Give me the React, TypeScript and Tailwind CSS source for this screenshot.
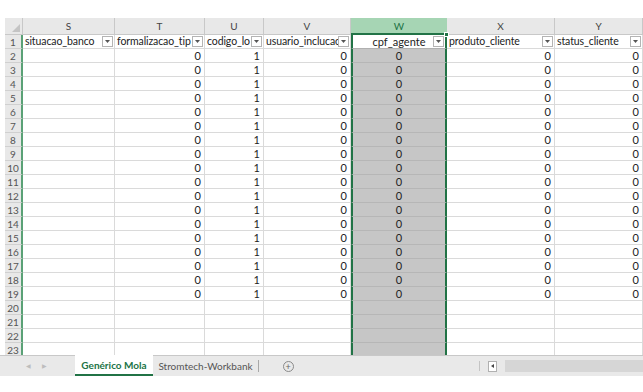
import React from "react";

type Col = {
  letter: string;
  width: string;
  head: string;
  value: string;
  valueAlign: string;
};

const cols: Col[] = [
  { letter: "S", width: "w-[92px]", head: "situacao_banco", value: "", valueAlign: "justify-end" },
  { letter: "T", width: "w-[90px]", head: "formalizacao_tip", value: "0", valueAlign: "justify-end" },
  { letter: "U", width: "w-[59px]", head: "codigo_lo", value: "1", valueAlign: "justify-end" },
  { letter: "V", width: "w-[87px]", head: "usuario_inclucac", value: "0", valueAlign: "justify-end" },
  { letter: "W", width: "w-[96px]", head: "cpf_agente", value: "0", valueAlign: "justify-center" },
  { letter: "X", width: "w-[108px]", head: "produto_cliente", value: "0", valueAlign: "justify-end" },
  { letter: "Y", width: "w-[88px]", head: "status_cliente", value: "0", valueAlign: "justify-end" },
];

const rows = Array.from({ length: 22 }, (_, i) => i + 2);

const FilterButton = () => (
  <span className="mr-[1px] flex h-[11px] w-[11px] shrink-0 items-center justify-center border border-[#b4b4b4] bg-white">
    <svg width="5" height="3" viewBox="0 0 5 3">
      <path d="M0 0h5L2.5 3z" fill="#555" />
    </svg>
  </span>
);

export default function App() {
  return (
    <div className="h-[392px] w-[643px] overflow-hidden bg-white pt-[18px] pl-[5px] font-['Lato','Liberation_Sans',sans-serif] text-[11px] leading-none text-[#222]">
      <div className="h-[337px] overflow-hidden">
        {/* column letters */}
        <div className="flex h-[17px]">
          <div className="relative w-[18px] shrink-0 border-r border-b border-[#c8c8c8] bg-[#e8e8e8]">
            <svg className="absolute right-[2px] bottom-[2px]" width="8" height="8" viewBox="0 0 8 8">
              <path d="M8 0v8H0z" fill="#c4c4c4" />
            </svg>
          </div>
          {cols.map((c) =>
            c.letter === "W" ? (
              <div
                key={c.letter}
                className={`${c.width} flex shrink-0 items-center justify-center border-b-2 border-[#217346] bg-[#a6d5b4] text-[10px] text-[#217346]`}
              >
                {c.letter}
              </div>
            ) : (
              <div
                key={c.letter}
                className={`${c.width} flex shrink-0 items-center justify-center border-r border-b border-[#c8c8c8] bg-[#e8e8e8] text-[10px] text-[#444]`}
              >
                {c.letter}
              </div>
            )
          )}
        </div>

        {/* header row 1 */}
        <div className="flex h-[14px]">
          <div className="flex w-[18px] shrink-0 items-center justify-center border-r-2 border-b border-r-[#5aa176] border-b-[#d0d0d0] bg-[#e8e8e8] text-[10px] text-[#555]">
            1
          </div>
          {cols.map((c) =>
            c.letter === "W" ? (
              <div
                key={c.letter}
                className={`${c.width} relative flex shrink-0 items-center border-x-2 border-b border-x-[#217346] border-b-[#b0b0b0] bg-white`}
              >
                <span className="flex-1 pl-[12px] text-center leading-[13px] whitespace-nowrap">{c.head}</span>
                <FilterButton />
                <span className="absolute -top-[3px] -right-[4px] h-[5px] w-[5px] border border-white bg-[#217346]" />
              </div>
            ) : (
              <div
                key={c.letter}
                className={`${c.width} flex shrink-0 items-center border-r border-b border-[#dadada]`}
              >
                <span className="min-w-0 flex-1 pl-[2px] text-[10.5px] leading-[13px] tracking-[-0.1px] whitespace-nowrap">
                  {c.head}
                </span>
                <FilterButton />
              </div>
            )
          )}
        </div>

        {rows.map((r) => (
          <div key={r} className="flex h-[14px]">
            <div className="flex w-[18px] shrink-0 items-center justify-center border-r-2 border-b border-r-[#5aa176] border-b-[#d0d0d0] bg-[#e8e8e8] text-[10px] text-[#555]">
              {r}
            </div>
            {cols.map((c) =>
              c.letter === "W" ? (
                <div
                  key={c.letter}
                  className={`${c.width} flex shrink-0 items-center justify-center border-x-2 border-b border-x-[#217346] border-b-[#b6b6b6] bg-[#c6c6c6]`}
                >
                  {r <= 19 ? c.value : ""}
                </div>
              ) : (
                <div
                  key={c.letter}
                  className={`${c.width} flex shrink-0 items-center ${c.valueAlign} border-r border-b border-[#dadada] pr-[3px]`}
                >
                  {r <= 19 ? c.value : ""}
                </div>
              )
            )}
          </div>
        ))}
      </div>

      {/* sheet tabs */}
      <div className="-ml-[5px] flex h-[21px] items-stretch border-t border-[#c8c8c8] bg-[#e9e9e9] text-[10px]">
        <div className="flex w-[75px] shrink-0 items-center gap-[11px] pl-[26px] text-[6px] text-[#bdbdbd]">
          <span>◀</span>
          <span>▶</span>
        </div>
        <div className="-mt-px flex w-[78px] shrink-0 items-center justify-center border-b-2 border-[#217346] bg-white font-bold text-[#217346]">
          Genérico Mola
        </div>
        <div className="flex w-[105px] shrink-0 items-center justify-center text-[#555]">Stromtech-Workbank</div>
        <div className="my-[4px] w-px bg-[#a8a8a8]" />
        <div className="flex w-[58px] shrink-0 items-center justify-center">
          <span className="flex h-[11px] w-[11px] items-center justify-center rounded-full border border-[#8a8a8a] text-[9px] leading-none text-[#666]">
            +
          </span>
        </div>
        <div className="flex-1" />
        <div className="flex items-center gap-[8px]">
          <span className="h-[10px] w-px bg-[#c4c4c4]" />
          <span className="flex h-[11px] w-[9px] items-center justify-center border border-[#b0b0b0] bg-white">
            <svg width="3" height="4" viewBox="0 0 3 4">
              <path d="M3 0v4L0 2z" fill="#444" />
            </svg>
          </span>
          <span className="h-[12px] w-[138px] bg-[#d6d6d6]" />
        </div>
      </div>
    </div>
  );
}
